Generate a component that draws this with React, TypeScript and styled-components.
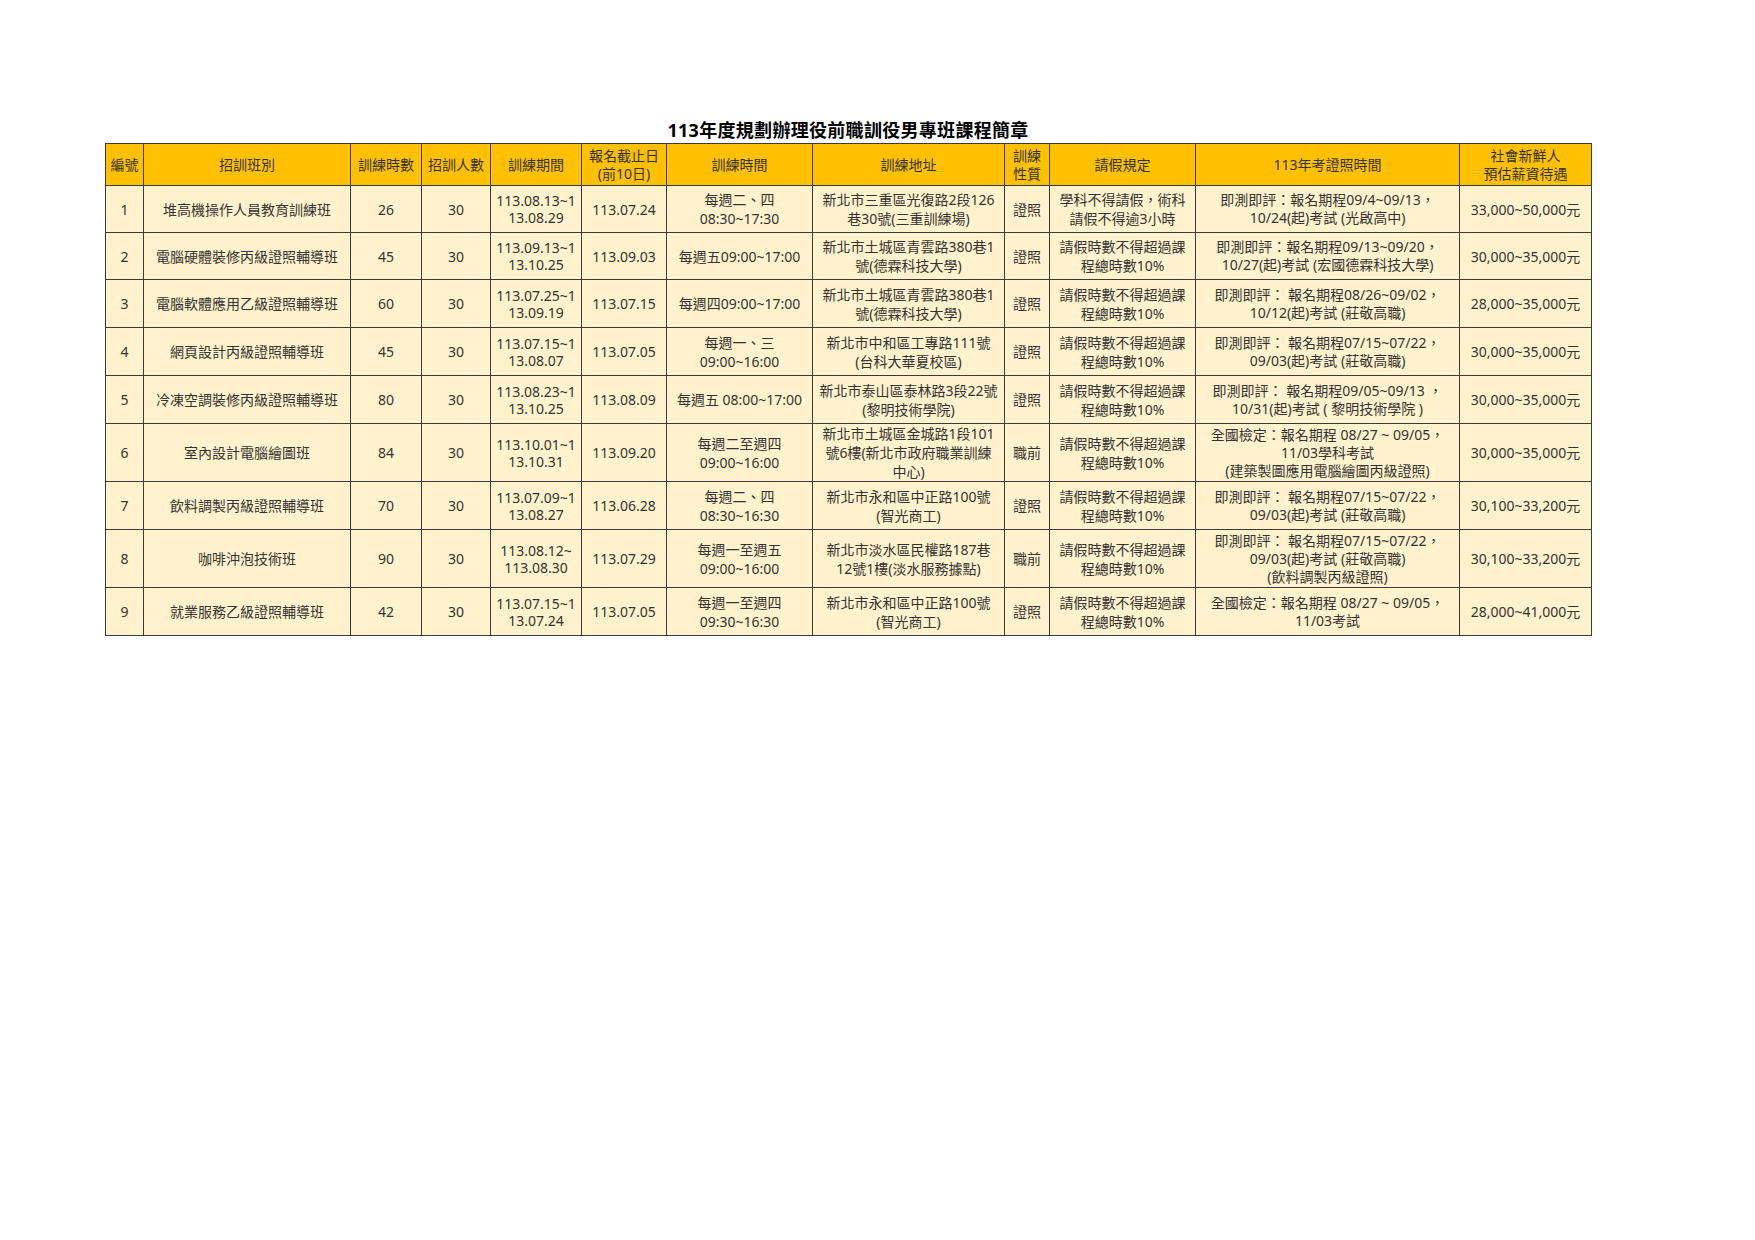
import React from "react";
import styled, { createGlobalStyle } from "styled-components";

const GlobalStyle = createGlobalStyle`
  html, body { margin: 0; padding: 0; background: #ffffff; }
  body { font-family: "Noto Sans", "Noto Sans CJK TC", sans-serif; }
`;

const Page = styled.div`
  padding: 118px 0 0 105px;
  width: 1486px;
`;

const Title = styled.h1`
  margin: 0;
  height: 25px;
  line-height: 24px;
  font-size: 18px;
  letter-spacing: 0.3px;
  font-weight: 700;
  text-align: center;
  color: #000;
  font-family: "Noto Sans", "Noto Sans CJK TC", sans-serif;
`;

const Table = styled.table`
  border-collapse: collapse;
  table-layout: fixed;
  width: 1486px;
  border: 1px solid #000;
  font-size: 14px;
  color: #333;
`;

const HeadRow = styled.tr`
  height: 42px;
  background: #ffc000;
`;

const Row = styled.tr<{ $h: number }>`
  height: ${(p) => p.$h}px;
  background: #fff2cc;
`;

const HeadCell = styled.th`
  border: 1px solid #3a3a3a;
  font-weight: 400;
  line-height: 18px;
  padding: 0 1px;
  text-align: center;
  vertical-align: middle;
  white-space: nowrap;
  color: #333;
`;

const Cell = styled.td<{ $lh: number }>`
  border: 1px solid #3a3a3a;
  line-height: ${(p) => p.$lh}px;
  padding: 0 1px;
  text-align: center;
  vertical-align: middle;
  white-space: nowrap;
  overflow: visible;
`;

const widths = [38, 207, 71, 69, 91, 85, 146, 192, 45, 146, 264, 132];
const lineHeights = [19, 19, 19, 19, 17, 19, 19, 19, 19, 19, 18, 19];

const headers: string[][] = [
  ["編號"],
  ["招訓班別"],
  ["訓練時數"],
  ["招訓人數"],
  ["訓練期間"],
  ["報名截止日", "(前10日)"],
  ["訓練時間"],
  ["訓練地址"],
  ["訓練", "性質"],
  ["請假規定"],
  ["113年考證照時間"],
  ["社會新鮮人", "預估薪資待遇"],
];

const leave = ["請假時數不得超過課", "程總時數10%"];

type RowData = { h: number; cells: string[][] };

const rows: RowData[] = [
  {
    h: 47,
    cells: [
      ["1"],
      ["堆高機操作人員教育訓練班"],
      ["26"],
      ["30"],
      ["113.08.13~1", "13.08.29"],
      ["113.07.24"],
      ["每週二、四", "08:30~17:30"],
      ["新北市三重區光復路2段126", "巷30號(三重訓練場)"],
      ["證照"],
      ["學科不得請假，術科", "請假不得逾3小時"],
      ["即測即評：報名期程09/4~09/13，", "10/24(起)考試 (光啟高中)"],
      ["33,000~50,000元"],
    ],
  },
  {
    h: 47,
    cells: [
      ["2"],
      ["電腦硬體裝修丙級證照輔導班"],
      ["45"],
      ["30"],
      ["113.09.13~1", "13.10.25"],
      ["113.09.03"],
      ["每週五09:00~17:00"],
      ["新北市土城區青雲路380巷1", "號(德霖科技大學)"],
      ["證照"],
      leave,
      ["即測即評：報名期程09/13~09/20，", "10/27(起)考試 (宏國德霖科技大學)"],
      ["30,000~35,000元"],
    ],
  },
  {
    h: 48,
    cells: [
      ["3"],
      ["電腦軟體應用乙級證照輔導班"],
      ["60"],
      ["30"],
      ["113.07.25~1", "13.09.19"],
      ["113.07.15"],
      ["每週四09:00~17:00"],
      ["新北市土城區青雲路380巷1", "號(德霖科技大學)"],
      ["證照"],
      leave,
      ["即測即評： 報名期程08/26~09/02，", "10/12(起)考試 (莊敬高職)"],
      ["28,000~35,000元"],
    ],
  },
  {
    h: 48,
    cells: [
      ["4"],
      ["網頁設計丙級證照輔導班"],
      ["45"],
      ["30"],
      ["113.07.15~1", "13.08.07"],
      ["113.07.05"],
      ["每週一、三", "09:00~16:00"],
      ["新北市中和區工專路111號", "(台科大華夏校區)"],
      ["證照"],
      leave,
      ["即測即評： 報名期程07/15~07/22，", "09/03(起)考試 (莊敬高職)"],
      ["30,000~35,000元"],
    ],
  },
  {
    h: 48,
    cells: [
      ["5"],
      ["冷凍空調裝修丙級證照輔導班"],
      ["80"],
      ["30"],
      ["113.08.23~1", "13.10.25"],
      ["113.08.09"],
      ["每週五 08:00~17:00"],
      ["新北市泰山區泰林路3段22號", "(黎明技術學院)"],
      ["證照"],
      leave,
      ["即測即評： 報名期程09/05~09/13 ，", "10/31(起)考試 ( 黎明技術學院 )"],
      ["30,000~35,000元"],
    ],
  },
  {
    h: 58,
    cells: [
      ["6"],
      ["室內設計電腦繪圖班"],
      ["84"],
      ["30"],
      ["113.10.01~1", "13.10.31"],
      ["113.09.20"],
      ["每週二至週四", "09:00~16:00"],
      ["新北市土城區金城路1段101", "號6樓(新北市政府職業訓練", "中心)"],
      ["職前"],
      leave,
      ["全國檢定：報名期程 08/27 ~ 09/05，", "11/03學科考試", "(建築製圖應用電腦繪圖丙級證照)"],
      ["30,000~35,000元"],
    ],
  },
  {
    h: 48,
    cells: [
      ["7"],
      ["飲料調製丙級證照輔導班"],
      ["70"],
      ["30"],
      ["113.07.09~1", "13.08.27"],
      ["113.06.28"],
      ["每週二、四", "08:30~16:30"],
      ["新北市永和區中正路100號", "(智光商工)"],
      ["證照"],
      leave,
      ["即測即評： 報名期程07/15~07/22，", "09/03(起)考試 (莊敬高職)"],
      ["30,100~33,200元"],
    ],
  },
  {
    h: 58,
    cells: [
      ["8"],
      ["咖啡沖泡技術班"],
      ["90"],
      ["30"],
      ["113.08.12~", "113.08.30"],
      ["113.07.29"],
      ["每週一至週五", "09:00~16:00"],
      ["新北市淡水區民權路187巷", "12號1樓(淡水服務據點)"],
      ["職前"],
      leave,
      ["即測即評： 報名期程07/15~07/22，", "09/03(起)考試 (莊敬高職)", "(飲料調製丙級證照)"],
      ["30,100~33,200元"],
    ],
  },
  {
    h: 48,
    cells: [
      ["9"],
      ["就業服務乙級證照輔導班"],
      ["42"],
      ["30"],
      ["113.07.15~1", "13.07.24"],
      ["113.07.05"],
      ["每週一至週四", "09:30~16:30"],
      ["新北市永和區中正路100號", "(智光商工)"],
      ["證照"],
      leave,
      ["全國檢定：報名期程 08/27 ~ 09/05，", "11/03考試"],
      ["28,000~41,000元"],
    ],
  },
];

const Lines: React.FC<{ lines: string[] }> = ({ lines }) => (
  <>
    {lines.map((l, i) => (
      <React.Fragment key={i}>
        {i > 0 && <br />}
        {l}
      </React.Fragment>
    ))}
  </>
);

export default function App() {
  return (
    <>
      <GlobalStyle />
      <Page>
        <Title>113年度規劃辦理役前職訓役男專班課程簡章</Title>
        <Table>
          <colgroup>
            {widths.map((w, i) => (
              <col key={i} style={{ width: w }} />
            ))}
          </colgroup>
          <thead>
            <HeadRow>
              {headers.map((h, i) => (
                <HeadCell key={i}>
                  <Lines lines={h} />
                </HeadCell>
              ))}
            </HeadRow>
          </thead>
          <tbody>
            {rows.map((r, i) => (
              <Row key={i} $h={r.h}>
                {r.cells.map((c, j) => (
                  <Cell key={j} $lh={lineHeights[j]}>
                    <Lines lines={c} />
                  </Cell>
                ))}
              </Row>
            ))}
          </tbody>
        </Table>
      </Page>
    </>
  );
}
